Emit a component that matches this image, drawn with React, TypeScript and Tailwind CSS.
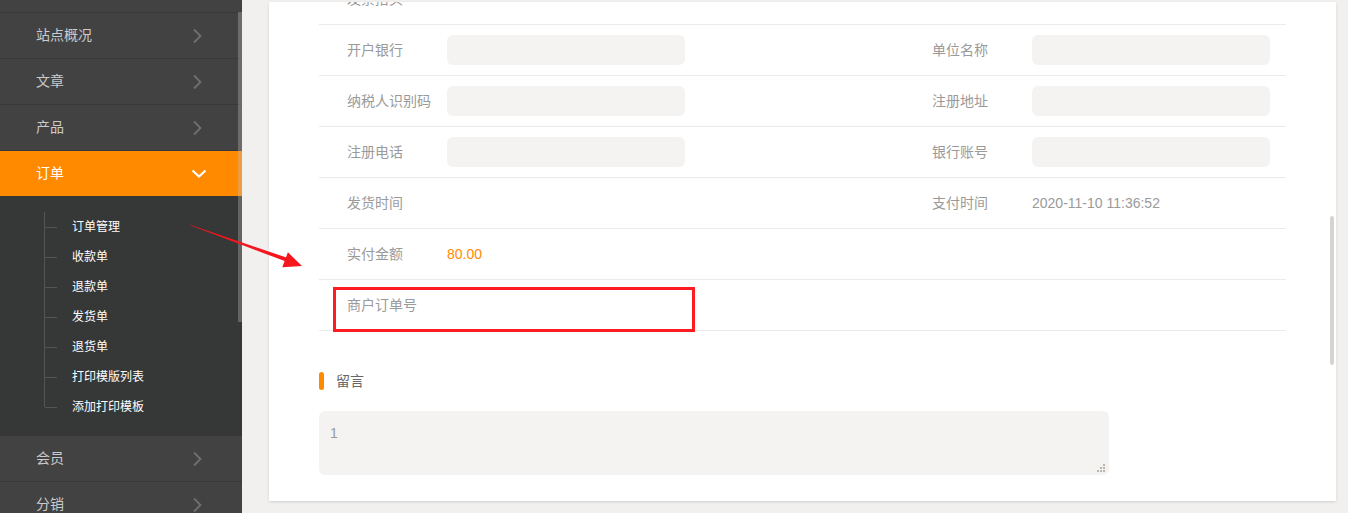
import React from 'react'

const menuTop = ['站点概况', '文章', '产品']
const subMenu = ['订单管理', '收款单', '退款单', '发货单', '退货单', '打印模版列表', '添加打印模板']
const menuBottom = ['会员', '分销']

const ChevronRight = () => (
  <svg width="10" height="16" viewBox="0 0 10 16" className="mr-[40px]">
    <path d="M2 1.5 L8.5 8 L2 14.5" fill="none" stroke="#707070" strokeWidth="1.8" />
  </svg>
)

const ChevronDown = () => (
  <svg width="16" height="10" viewBox="0 0 16 10" className="mr-[35px]">
    <path d="M1.5 1.5 L8 7.5 L14.5 1.5" fill="none" stroke="#ffffff" strokeWidth="2.2" />
  </svg>
)

const MenuRow = ({ label }: { label: string }) => (
  <div className="h-[46px] flex items-center justify-between border-t border-[#393939] pl-[36px]">
    <span className="text-[14px] text-[#cbcbcb]">{label}</span>
    <ChevronRight />
  </div>
)

interface FormRowProps {
  left: string
  leftValue?: React.ReactNode
  right?: string
  rightValue?: React.ReactNode
  children?: React.ReactNode
}

const Field = () => <div className="w-[238px] h-[30px] rounded-[6px] bg-[#f4f3f1]" />

const FormRow: React.FC<FormRowProps> = ({ left, leftValue, right, rightValue, children }) => (
  <div className="relative h-[51px] flex items-center border-b border-[#ebebeb] text-[14px]">
    <div className="w-[613px] flex items-center pl-[28px]">
      <span className="w-[100px] text-[#9a9a9a]">{left}</span>
      {leftValue}
    </div>
    {right && (
      <div className="flex items-center">
        <span className="w-[100px] text-[#9a9a9a]">{right}</span>
        {rightValue}
      </div>
    )}
    {children}
  </div>
)

export default function App() {
  return (
    <div
      className="relative flex h-[513px] w-[1348px] overflow-hidden bg-[#f1f0ee]"
      style={{ fontFamily: '"Liberation Sans", "Noto Sans CJK SC", sans-serif' }}
    >
      {/* sidebar */}
      <aside className="relative w-[242px] shrink-0 bg-[#424242] pt-[12px]">
        {menuTop.map((m) => (
          <MenuRow key={m} label={m} />
        ))}
        <div className="h-[46px] flex items-center justify-between bg-[#ff8a00] border-t border-[#393939] pl-[36px]">
          <span className="text-[14px] text-white">订单</span>
          <ChevronDown />
        </div>
        <div className="h-[239px] bg-[#363737] pt-[16px]">
          <div className="relative ml-[44px] h-[195px] border-l border-[#545454]">
            {subMenu.map((s) => (
              <div key={s} className="flex items-center h-[30px]">
                <div className="w-[12px] border-t border-[#545454]" />
                <span className="ml-[15px] text-[12px] text-white">{s}</span>
              </div>
            ))}
          </div>
        </div>
        {menuBottom.map((m) => (
          <MenuRow key={m} label={m} />
        ))}
        <div className="absolute right-0 top-[12px] w-[4px] h-[310px] bg-[rgba(200,198,192,0.32)]" />
      </aside>

      {/* main */}
      <main className="relative flex-1 pl-[27px] pr-[12px] pt-[2px]">
        <div className="h-[499px] bg-white shadow-sm overflow-hidden px-[50px]">
          <div className="-mt-[28px]">
            <FormRow left="发票抬头" />
            <FormRow left="开户银行" leftValue={<Field />} right="单位名称" rightValue={<Field />} />
            <FormRow left="纳税人识别码" leftValue={<Field />} right="注册地址" rightValue={<Field />} />
            <FormRow left="注册电话" leftValue={<Field />} right="银行账号" rightValue={<Field />} />
            <FormRow
              left="发货时间"
              right="支付时间"
              rightValue={<span className="text-[#9a9a9a]">2020-11-10 11:36:52</span>}
            />
            <FormRow left="实付金额" leftValue={<span className="text-[#ff8a00]">80.00</span>} />
            <FormRow left="商户订单号">
              <div className="absolute left-[14px] top-[7px] w-[362px] h-[45px] border-[3px] border-[#fe1b22]" />
            </FormRow>
          </div>

          <div className="mt-[40px] flex items-center h-[20px]">
            <div className="w-[5px] h-[18px] rounded-full bg-[#ff8a00]" />
            <span className="ml-[12px] text-[14px] text-[#666]">留言</span>
          </div>

          <div className="relative mt-[20px] w-[790px] h-[64px] rounded-[6px] bg-[#f4f3f1] px-[11px] pt-[12px] text-[14px] text-[#9a9a9a] leading-[20px]">
            1
            <svg width="10" height="10" viewBox="0 0 10 10" className="absolute right-[3px] bottom-[2px]">
              <rect x="7" y="1" width="2" height="2" fill="#bcb6ae" />
              <rect x="4" y="4" width="2" height="2" fill="#bcb6ae" />
              <rect x="7" y="4" width="2" height="2" fill="#bcb6ae" />
              <rect x="1" y="7" width="2" height="2" fill="#bcb6ae" />
              <rect x="4" y="7" width="2" height="2" fill="#bcb6ae" />
              <rect x="7" y="7" width="2" height="2" fill="#bcb6ae" />
            </svg>
          </div>
        </div>
        <div className="absolute right-[14px] top-[216px] w-[4px] h-[149px] rounded-full bg-[#d7d4d0]" />
      </main>

      {/* annotation arrow */}
      <svg className="absolute left-0 top-0 pointer-events-none" width="1348" height="513">
        <polygon points="190,224.7 190,225.3 288.7,262.6 290.1,258.8" fill="#f5161e" />
        <polygon points="302,266 287.9,252.3 282.3,267.3" fill="#f5161e" />
      </svg>
    </div>
  )
}
